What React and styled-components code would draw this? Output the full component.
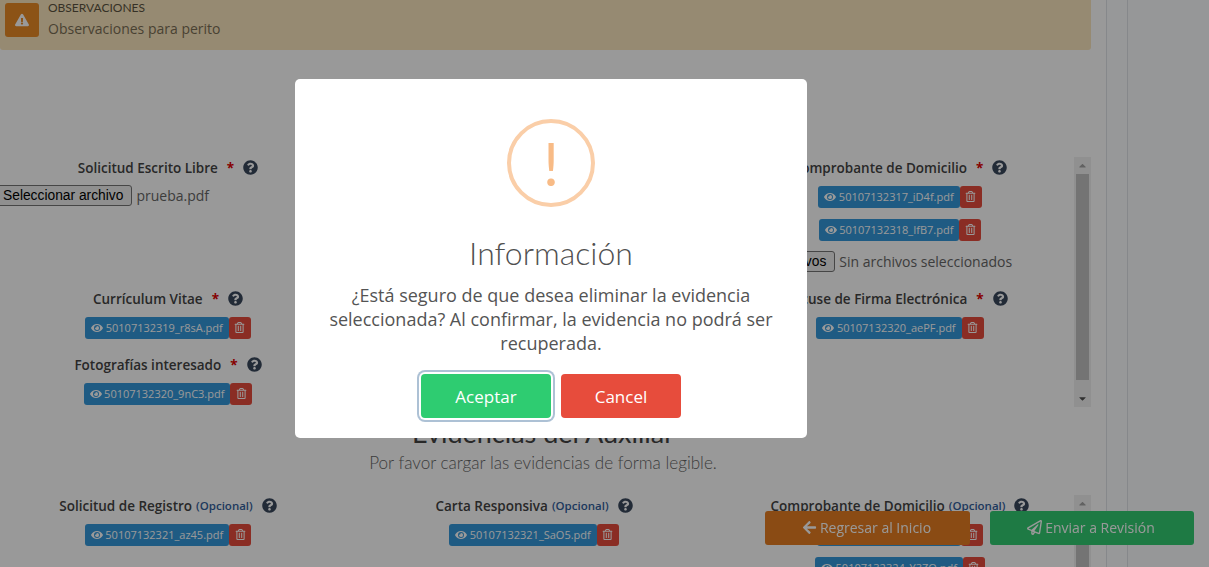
import React from "react";
import styled, { createGlobalStyle } from "styled-components";
import { FaQuestionCircle, FaEye, FaRegTrashAlt, FaExclamationTriangle, FaArrowLeft, FaRegPaperPlane, FaCaretUp, FaCaretDown } from "react-icons/fa";

const Global = createGlobalStyle`
  html, body { margin: 0; padding: 0; height: 100%; overflow: hidden; background: #fff; }
  body { font-family: "Open Sans", "Liberation Sans", sans-serif; color: #444; }
  * { box-sizing: border-box; }
`;

const Page = styled.div`
  display: flex;
  width: 1209px;
  height: 567px;
  overflow: hidden;
  background: #fff;
`;
const Main = styled.main`
  flex: 0 0 1091px;
  min-width: 0;
`;
const Rail = styled.aside`
  flex: 0 0 22px;
  margin-left: 15px;
  border-left: 1px solid #dfe3e8;
  border-right: 1px solid #dfe3e8;
  background: #fcfdff;
`;
const Rest = styled.div`
  flex: 1;
  background: #fbfcfe;
`;

const Alert = styled.section`
  display: flex;
  gap: 9px;
  height: 50px;
  padding: 3px 5px 0;
  background: #fae6be;
  border-radius: 0 0 3px 3px;
`;
const AlertIcon = styled.div`
  width: 34px;
  height: 34px;
  display: flex;
  align-items: center;
  justify-content: center;
  background: #e98a25;
  color: #fff;
  border-radius: 3px;
  font-size: 14px;
`;
const AlertBody = styled.div`
  display: flex;
  flex-direction: column;
`;
const AlertTitle = styled.div`
  font-family: "Lato", sans-serif;
  font-size: 12px;
  line-height: 9px;
  color: #5a5340;
  text-transform: uppercase;
`;
const AlertText = styled.div`
  margin-top: 7px;
  font-size: 14px;
  line-height: 20px;
  color: #7a6e55;
`;

const Scroller = styled.section`
  position: relative;
  height: ${(p) => p.$h}px;
  margin-top: ${(p) => p.$top}px;
  overflow: hidden;
`;
const Grid = styled.div`
  display: grid;
  grid-template-columns: repeat(3, 366px);
  margin-left: -15px;
`;
const Field = styled.div`
  display: flex;
  flex-direction: column;
  align-items: center;
  min-height: ${(p) => p.$min || 0}px;
`;
const Label = styled.div`
  display: flex;
  align-items: center;
  height: 21px;
  margin-top: ${(p) => p.$top || 0}px;
  font-size: 13.5px;
  font-weight: 600;
  color: #444;
  white-space: nowrap;
`;
const Star = styled.span`
  margin-left: 9px;
  color: #e00000;
  font-weight: 700;
`;
const Optional = styled.span`
  margin-left: 4px;
  font-size: 11.5px;
  color: #33609c;
`;
const Help = styled(FaQuestionCircle)`
  margin-left: 9px;
  font-size: 15px;
  color: #3a485d;
`;
const ChipRow = styled.div`
  display: flex;
  margin-top: ${(p) => p.$top ?? 7.5}px;
`;
const Chip = styled.a`
  display: flex;
  align-items: center;
  gap: 2.5px;
  height: 22px;
  padding: 0 6px;
  background: #3498db;
  color: #fff;
  font-size: 11px;
  border-radius: 3px;
  white-space: nowrap;
  & svg { font-size: 12px; }
`;
const Del = styled.button`
  display: flex;
  align-items: center;
  justify-content: center;
  width: 22px;
  height: 22px;
  padding: 0;
  border: 0;
  background: #e74c3c;
  color: #fff;
  font-size: 11px;
  border-radius: 3px;
`;
const FileRow = styled.div`
  align-self: flex-start;
  display: flex;
  align-items: center;
  margin-top: ${(p) => p.$top}px;
  margin-left: ${(p) => p.$left}px;
  font-size: 14px;
  color: #666;
  white-space: nowrap;
`;
const FileBtn = styled.button`
  height: 21px;
  padding: 0 8px 0 5px;
  margin-right: 4px;
  font-family: "Liberation Sans", Arial, sans-serif;
  font-size: 13.8px;
  color: #000;
  background: #efefef;
  border: 1px solid #767676;
  border-radius: 3px;
`;
const Track = styled.div`
  position: absolute;
  top: 0;
  right: 0;
  bottom: 0;
  width: 17px;
  display: flex;
  flex-direction: column;
  align-items: center;
  background: #f1f1f1;
  color: #505050;
  font-size: 11px;
`;
const Arrow = styled.div`
  flex: 0 0 17px;
  display: flex;
  align-items: center;
  justify-content: center;
  color: ${(p) => p.$c};
`;
const Thumb = styled.div`
  width: 13px;
  height: ${(p) => p.$h}px;
  background: #c1c1c1;
`;
const Spacer = styled.div`
  flex: 1;
`;

const Heading = styled.div`
  margin-top: 10px;
  padding-right: 5px;
  text-align: center;
`;
const H2 = styled.h2`
  margin: 0;
  font-family: "Lato", sans-serif;
  font-size: 27px;
  line-height: 32px;
  font-weight: 400;
  color: #444;
`;
const Sub = styled.p`
  margin: 3px 0 0;
  font-family: "Lato", sans-serif;
  font-size: 17.1px;
  line-height: 22px;
  font-weight: 300;
  color: #666;
`;

const Footer = styled.div`
  position: fixed;
  left: 765px;
  top: 511px;
  display: flex;
  gap: 20px;
`;
const FootBtn = styled.button`
  display: flex;
  align-items: center;
  justify-content: center;
  gap: 3px;
  width: ${(p) => p.$w}px;
  height: 34px;
  padding: 0 2px 2px 0;
  border: 0;
  border-radius: 3px;
  background: ${(p) => p.$bg};
  color: #fff;
  font-family: "Open Sans", sans-serif;
  font-size: 14px;
  & svg { font-size: 15px; }
`;

const Overlay = styled.div`
  position: fixed;
  inset: 0;
  display: flex;
  justify-content: center;
  align-items: flex-start;
  padding: 79px 107px 0 0;
  background: rgba(0, 0, 0, 0.4);
`;
const Modal = styled.div`
  width: 512px;
  height: 359px;
  padding: 40px 20px 20px;
  background: #fff;
  border-radius: 5px;
  text-align: center;
`;
const Ring = styled.div`
  width: 88px;
  height: 88px;
  margin: 0 auto;
  display: flex;
  align-items: center;
  justify-content: center;
  border: 4px solid #facea8;
  border-radius: 50%;
  color: #f8bb86;
  font-family: "Lato", sans-serif;
  font-size: 60px;
  line-height: 1;
  font-weight: 400;
`;
const Title = styled.h3`
  margin: 28px 0 0;
  font-family: "Lato", sans-serif;
  font-size: 32px;
  line-height: 36px;
  font-weight: 300;
  color: #505050;
`;
const Message = styled.p`
  margin: 12px 0 0;
  font-size: 18px;
  line-height: 24px;
  color: #545454;
`;
const Actions = styled.div`
  display: flex;
  justify-content: center;
  gap: 10px;
  margin-top: 19px;
`;
const ModalBtn = styled.button`
  width: ${(p) => p.$w}px;
  height: 44px;
  border: 0;
  border-radius: 4px;
  background: ${(p) => p.$bg};
  color: #fff;
  font-family: "Open Sans", sans-serif;
  font-size: 17px;
  box-shadow: ${(p) => (p.$focus ? "0 0 0 2px #fff, 0 0 0 4px rgba(50,100,150,.4)" : "none")};
`;

const File = ({ name, top }) => (
  <ChipRow $top={top}>
    <Chip><FaEye />{name}</Chip>
    <Del><FaRegTrashAlt /></Del>
  </ChipRow>
);
const Lab = ({ text, optional, top }) => (
  <Label $top={top}>
    {text}
    {optional ? <Optional>(Opcional)</Optional> : <Star>*</Star>}
    <Help />
  </Label>
);
const Bar = ({ thumb, clipped }) => (
  <Track>
    <Arrow $c="#a3a3a3"><FaCaretUp /></Arrow>
    <Thumb $h={thumb} />
    {!clipped && <Spacer />}
    {!clipped && <Arrow $c="#505050"><FaCaretDown /></Arrow>}
  </Track>
);

export default function App() {
  return (
    <>
      <Global />
      <Page>
        <Main>
          <Alert>
            <AlertIcon><FaExclamationTriangle /></AlertIcon>
            <AlertBody>
              <AlertTitle>Observaciones</AlertTitle>
              <AlertText>Observaciones para perito</AlertText>
            </AlertBody>
          </Alert>

          <Scroller $h={250} $top={107}>
            <Grid>
              <Field $min={131}>
                <Lab text="Solicitud Escrito Libre" />
                <FileRow $top={7} $left={12}><FileBtn>Seleccionar archivo</FileBtn>prueba.pdf</FileRow>
              </Field>
              <Field />
              <Field>
                <Lab text="Comprobante de Domicilio" />
                <File name="50107132317_iD4f.pdf" />
                <File name="50107132318_IfB7.pdf" top={11} />
                <FileRow $top={10} $left={-24}><FileBtn>Seleccionar archivos</FileBtn>Sin archivos seleccionados</FileRow>
              </Field>
              <Field>
                <Lab text="Currículum Vitae" />
                <File name="50107132319_r8sA.pdf" />
                <Lab text="Fotografías interesado" top={15.5} />
                <File name="50107132320_9nC3.pdf" />
              </Field>
              <Field />
              <Field>
                <Lab text="Acuse de Firma Electrónica" />
                <File name="50107132320_aePF.pdf" />
              </Field>
            </Grid>
            <Bar thumb={206} />
          </Scroller>

          <Heading>
            <H2>Evidencias del Auxiliar</H2>
            <Sub>Por favor cargar las evidencias de forma legible.</Sub>
          </Heading>

          <Scroller $h={72} $top={21}>
            <Grid>
              <Field>
                <Lab text="Solicitud de Registro" optional />
                <File name="50107132321_az45.pdf" />
              </Field>
              <Field>
                <Lab text="Carta Responsiva" optional />
                <File name="50107132321_SaO5.pdf" />
              </Field>
              <Field>
                <Lab text="Comprobante de Domicilio" optional />
                <File name="50107132323_xT9k.pdf" />
                <File name="50107132324_Y3ZQ.pdf" top={11} />
              </Field>
            </Grid>
            <Bar thumb={60} clipped />
          </Scroller>
        </Main>
        <Rail />
        <Rest />
      </Page>

      <Footer>
        <FootBtn $w={205} $bg="#e67e22"><FaArrowLeft />Regresar al Inicio</FootBtn>
        <FootBtn $w={204} $bg="#32cc72"><FaRegPaperPlane />Enviar a Revisión</FootBtn>
      </Footer>

      <Overlay>
        <Modal>
          <Ring>!</Ring>
          <Title>Información</Title>
          <Message>¿Está seguro de que desea eliminar la evidencia seleccionada? Al confirmar, la evidencia no podrá ser recuperada.</Message>
          <Actions>
            <ModalBtn $w={130} $bg="#2ecc71" $focus>Aceptar</ModalBtn>
            <ModalBtn $w={120} $bg="#e74c3c">Cancel</ModalBtn>
          </Actions>
        </Modal>
      </Overlay>
    </>
  );
}
